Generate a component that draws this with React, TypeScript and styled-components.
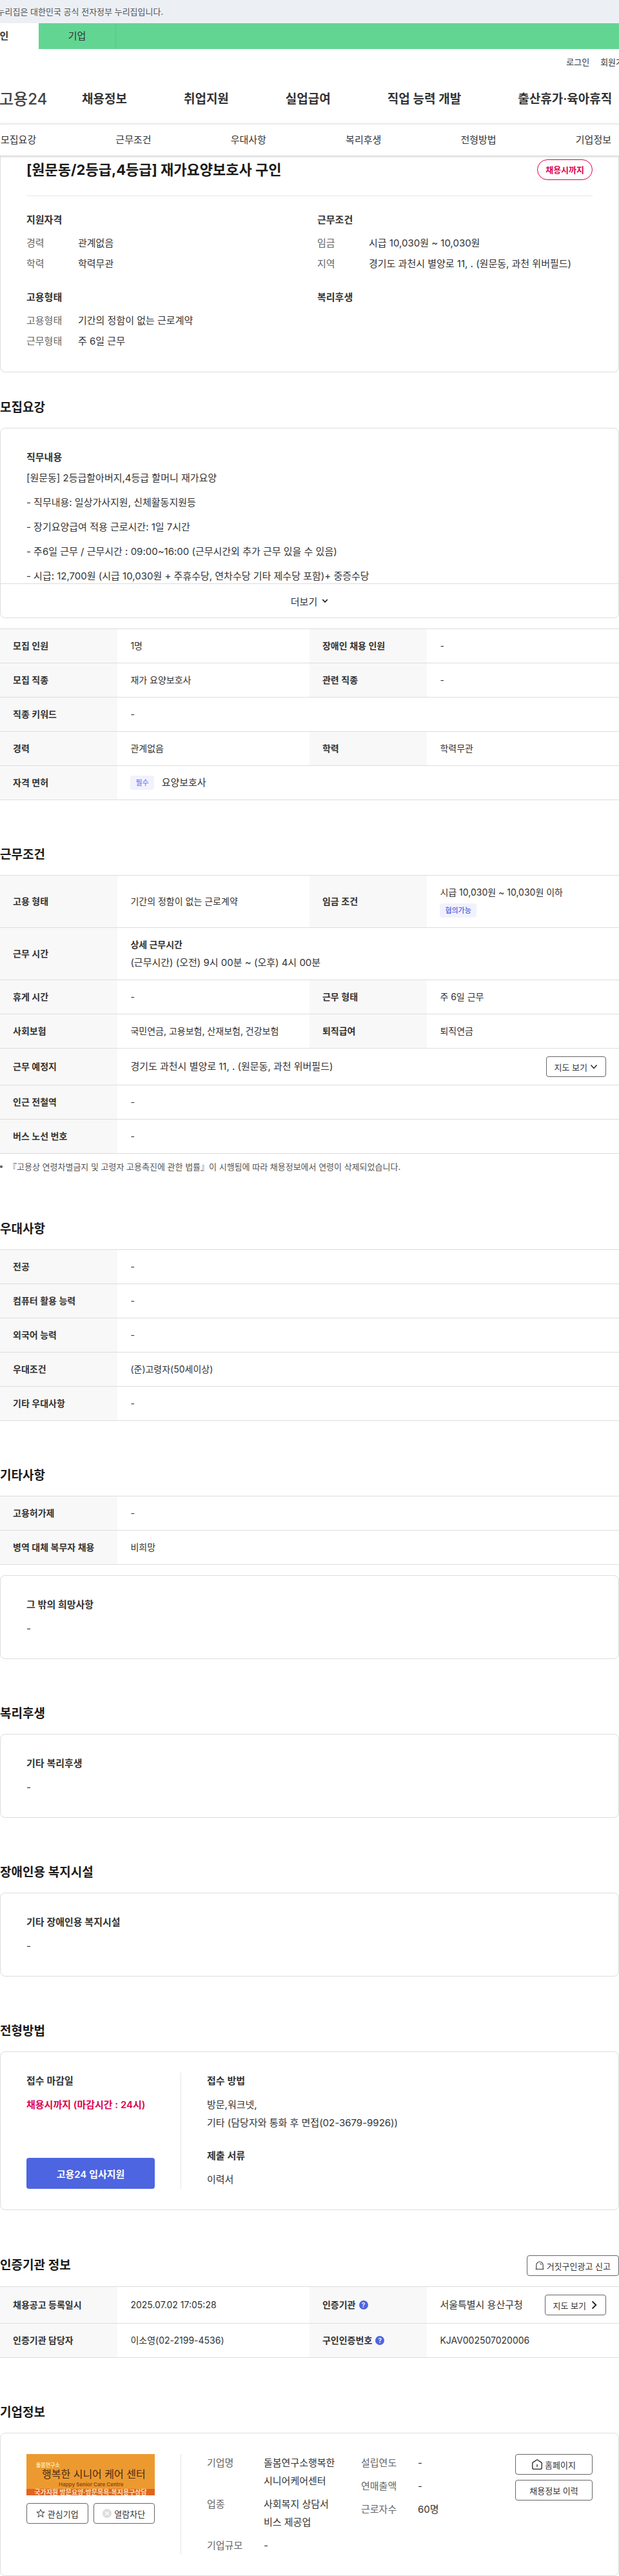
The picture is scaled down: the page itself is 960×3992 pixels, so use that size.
import React from "react";
import styled, { createGlobalStyle, css } from "styled-components";

const GlobalStyle = createGlobalStyle`
  *, *::before, *::after { box-sizing: border-box; }
  body {
    margin: 0;
    background: #fff;
    color: #333;
    font-family: Inter, "Noto Sans CJK KR", sans-serif;
    font-size: 15px;
    line-height: 24px;
    overflow-x: hidden;
  }
  h1, h2, h3, p, dl, dd, ul, figure { margin: 0; padding: 0; }
  a { color: inherit; text-decoration: none; }
  button { font-family: inherit; color: inherit; cursor: pointer; }
`;

/* ---------- header ---------- */

const Clip = styled.div`
  overflow: hidden;
`;

const OfficialBanner = styled(Clip)`
  height: 36px;
  background: #ecf0f5;
`;

const OfficialText = styled.p`
  margin-left: -20px;
  font-size: 13px;
  line-height: 36px;
  color: #555;
  white-space: nowrap;
`;

const MemberTabs = styled(Clip)`
  background: #62d593;
`;

const TabList = styled.nav`
  display: flex;
  margin-left: -60px;
`;

const MemberTab = styled.a<{ $active?: boolean }>`
  width: 120px;
  height: 40px;
  line-height: 40px;
  text-align: center;
  border-right: 1px solid #56c987;
  ${(p) =>
    p.$active &&
    css`
      background: #fff;
      border-right-color: #fff;
      font-weight: 600;
    `}
`;

const Utility = styled(Clip)`
  display: flex;
  justify-content: flex-end;
  height: 40px;
`;

const UtilityLinks = styled.div`
  display: flex;
  gap: 17px;
  margin-right: -19px;
  font-size: 13px;
  line-height: 40px;
  white-space: nowrap;
`;

const MainNav = styled.nav`
  display: flex;
  align-items: center;
  height: 76px;
  white-space: nowrap;
`;

const Logo = styled.a`
  width: 128px;
  margin-left: -1px;
  font-size: 24px;
  font-weight: 500;
  color: #444;
`;

const MainMenu = styled.div`
  display: flex;
  flex: 1;
  gap: 88px;
  font-size: 19px;
  font-weight: 600;
`;

const SectionNav = styled.nav`
  position: relative;
  z-index: 1;
  display: flex;
  justify-content: space-between;
  padding: 0 12px 0 1px;
  border-top: 1px solid #e6e6e6;
  background: #fff;
  box-shadow: 0 1px 4px rgba(0, 0, 0, 0.25);
  line-height: 48px;
`;

/* ---------- shared blocks ---------- */

const Section = styled.section<{ $tight?: boolean }>`
  margin-top: ${(p) => (p.$tight ? 40 : 70)}px;
`;

const SectionHead = styled.div`
  display: flex;
  align-items: center;
  justify-content: space-between;
  margin-bottom: 16px;
`;

const Heading = styled.h2`
  font-size: 19px;
  line-height: 30px;
  font-weight: 600;
  color: #1a1a1a;
`;

const Card = styled.div<{ $spaced?: boolean }>`
  padding: 32px 40px;
  border: 1px solid #ddd;
  border-radius: 8px;
  margin-top: ${(p) => (p.$spaced ? 16 : 0)}px;
`;

const SubTitle = styled.h3`
  font-size: 15px;
  line-height: 26px;
  font-weight: 600;
`;

const BodyText = styled.p`
  margin-top: 10px;
  line-height: 28px;
`;

const Deadline = styled(BodyText)`
  font-weight: 600;
  color: #de0050;
`;

const OutlineButton = styled.button<{ $wide?: boolean }>`
  display: inline-flex;
  align-items: center;
  justify-content: center;
  gap: 4px;
  height: 32px;
  padding: 0 12px;
  flex: ${(p) => (p.$wide ? "1 1 0" : "none")};
  border: 1px solid #666;
  border-radius: 4px;
  background: #fff;
  font-size: 13px;
  white-space: nowrap;
`;

const Tag = styled.span<{ $soft?: boolean }>`
  display: inline-block;
  height: 22px;
  padding: 0 8px;
  border-radius: 4px;
  background: #f2f2fe;
  color: ${(p) => (p.$soft ? "#6c83f0" : "#4d63e0")};
  font-size: 11px;
  line-height: 22px;
  font-weight: 500;
`;

/* ---------- summary card ---------- */

const Summary = styled(Card)`
  padding-top: 6px;
  padding-bottom: 35px;
  border-top: 0;
  border-radius: 0 0 8px 8px;
`;

const TitleRow = styled.div`
  display: flex;
  align-items: center;
  justify-content: space-between;
  padding-bottom: 24px;
  border-bottom: 1px solid #e6e6e6;
`;

const JobTitle = styled.h1`
  font-size: 22px;
  line-height: 32px;
  font-weight: 700;
  color: #1a1a1a;
`;

const DueBadge = styled.span`
  padding: 0 12px;
  border: 1px solid #de0050;
  border-radius: 16px;
  color: #de0050;
  font-size: 13px;
  line-height: 30px;
  font-weight: 600;
`;

const SummaryGrid = styled.div`
  display: grid;
  grid-template-columns: 1fr 1fr;
  gap: 28px 24px;
  margin-top: 25px;
`;

const SummaryTitle = styled(SubTitle)`
  margin-bottom: 12px;
  line-height: 24px;
`;

const SummaryList = styled.dl`
  display: grid;
  grid-template-columns: 80px 1fr;
  row-gap: 8px;
  dt { color: #666; }
`;

/* ---------- job description ---------- */

const DescriptionCard = styled(Card)`
  padding: 0;
`;

const DescriptionBody = styled.div`
  max-height: 240px;
  padding: 32px 40px 0;
  overflow: hidden;
`;

const DescriptionLine = styled.p`
  line-height: 38px;
`;

const MoreButton = styled.button`
  display: flex;
  align-items: center;
  justify-content: center;
  gap: 7px;
  width: 100%;
  height: 53px;
  border: 0;
  border-top: 1px solid #ddd;
  border-radius: 0 0 8px 8px;
  background: #fff;
  font-size: 15px;
`;

/* ---------- tables ---------- */

const Table = styled.table`
  width: 100%;
  table-layout: fixed;
  border-collapse: separate;
  border-spacing: 0;
  border-top: 1px solid #ddd;
  font-size: 14px;

  th, td {
    height: 53px;
    padding: 12px 20px;
    border-bottom: 1px solid #ddd;
    text-align: left;
    vertical-align: middle;
  }
  th {
    background: #f8f8f8;
    font-weight: 600;
  }
`;

const LabelCol = styled.col`
  width: 19%;
`;

const ValueCol = styled.col`
  width: 31%;
`;

const TableGap = styled.div`
  margin-top: 16px;
`;

const Split = styled.div`
  display: flex;
  align-items: center;
  justify-content: space-between;
  font-size: 15px;
`;

const Tagged = styled.div`
  display: flex;
  align-items: center;
  gap: 12px;
  font-size: 15px;
`;

const Stack = styled.div`
  display: grid;
  gap: 4px;
  padding: 2px 0;
`;

const TagLine = styled.div`
  display: flex;
  align-items: center;
  height: 24px;
`;

const Large = styled.span`
  font-size: 15px;
`;

const HelpLabel = styled.span`
  display: inline-flex;
  align-items: center;
  gap: 5px;
`;

const HelpButton = styled.button`
  width: 14px;
  height: 14px;
  padding: 0;
  border: 0;
  border-radius: 50%;
  background: #4d65e0;
  color: #fff;
  font-size: 10px;
  line-height: 14px;
  font-weight: 600;
`;

const Note = styled.p`
  display: flex;
  align-items: center;
  gap: 9px;
  margin-top: 8px;
  font-size: 13px;
  color: #555;
  &::before {
    content: "";
    width: 4px;
    height: 4px;
    border-radius: 50%;
    background: #555;
  }
`;

/* ---------- two part cards ---------- */

const PartedCard = styled(Card)`
  display: flex;
`;

const SidePart = styled.div`
  display: flex;
  flex-direction: column;
  flex: none;
  width: 240px;
  padding-right: 40px;
  border-right: 1px solid #e6e6e6;
`;

const MainPart = styled.div`
  flex: 1;
  display: flex;
  align-items: flex-start;
  padding-left: 40px;
`;

const ApplyButton = styled.button`
  height: 48px;
  margin-top: auto;
  border: 0;
  border-radius: 4px;
  background: #4d65e0;
  color: #fff;
  font-size: 15px;
  font-weight: 600;
`;

const MethodGroup = styled.div`
  & + & { margin-top: 24px; }
`;

const CompanyLogo = styled.figure`
  display: flex;
  flex-direction: column;
  height: 64px;
  background: #ec9a30;
  white-space: nowrap;
`;

const LogoTop = styled.span`
  padding: 12px 0 0 15px;
  color: #fbe9b0;
  font-size: 8px;
  line-height: 10px;
  font-weight: 700;
`;

const LogoName = styled.span`
  padding-left: 24px;
  color: #4b2a12;
  font-size: 16px;
  line-height: 19px;
`;

const LogoEnglish = styled.span`
  padding-left: 50px;
  color: #8a4a17;
  font-size: 8px;
  line-height: 13px;
  font-weight: 600;
`;

const LogoStrip = styled.span`
  background: #e0641f;
  color: #fbe3c4;
  font-size: 10px;
  line-height: 10px;
  font-weight: 600;
  text-align: center;
`;

const ButtonPair = styled.div`
  display: flex;
  gap: 8px;
  margin-top: 12px;
`;

const CompanyList = styled.dl`
  flex: 1;
  display: grid;
  grid-template-columns: 88px 1fr;
  row-gap: 8px;
  padding-right: 38px;
  line-height: 28px;
  dt { color: #666; }
`;

const ButtonColumn = styled.div`
  display: grid;
  flex: none;
  gap: 8px;
  width: 120px;
`;

/* ---------- icons ---------- */

const Chevron = ({ dir, size, weight }: { dir: "down" | "right"; size: number; weight: number }) => (
  <svg width={size} height={size} viewBox="0 0 10 10" fill="none" stroke="#222" strokeWidth={weight} aria-hidden="true">
    <path d={dir === "down" ? "M1.2 3 5 7l3.8-4" : "M4 1l4 4-4 4"} />
  </svg>
);

const StarIcon = () => (
  <svg width="14" height="14" viewBox="0 0 14 14" fill="none" stroke="#555" strokeWidth="1.1" strokeLinejoin="round" aria-hidden="true">
    <path d="M7 .9l1.7 4H13L9.6 7.700l1.300 4.900L7 9.800l-3.900 2.800 1.300-4.900L1 4.900h4.300z" />
  </svg>
);

const BlockIcon = () => (
  <svg width="14" height="14" viewBox="0 0 14 14" aria-hidden="true">
    <circle cx="7" cy="7" r="7" fill="#ddd" />
    <path d="M4.200 4.200l5.600 5.600M9.800 4.200L4.200 9.800" stroke="#fff" strokeWidth="1.400" />
  </svg>
);

const SirenIcon = () => (
  <svg width="14" height="14" viewBox="0 0 14 14" fill="none" stroke="#333" strokeWidth="1.100" aria-hidden="true">
    <path d="M1.800 12.500V6.200a5.200 5.200 0 0 1 10.400 0v6.300M.6 12.500h12.800M7.500 3.800a2.200 2.200 0 0 1 2 2" />
  </svg>
);

const HomeIcon = () => (
  <svg width="16" height="16" viewBox="0 0 16 16" fill="none" stroke="#222" strokeWidth="1.300" strokeLinejoin="round" aria-hidden="true">
    <path d="M.8 5.400 8 .8l7.200 4.600v8.200a1.800 1.800 0 0 1-1.800 1.800H2.600a1.800 1.800 0 0 1-1.800-1.800zM8 8v4" />
  </svg>
);

/* ---------- data ---------- */

const menu = ["채용정보", "취업지원", "실업급여", "직업 능력 개발", "출산휴가·육아휴직"];
const sections = ["모집요강", "근무조건", "우대사항", "복리후생", "전형방법", "기업정보"];

const summary: { title: string; rows: [string, string][] }[] = [
  { title: "지원자격", rows: [["경력", "관계없음"], ["학력", "학력무관"]] },
  { title: "근무조건", rows: [["임금", "시급 10,030원 ~ 10,030원"], ["지역", "경기도 과천시 별양로 11, . (원문동, 과천 위버필드)"]] },
  { title: "고용형태", rows: [["고용형태", "기간의 정함이 없는 근로계약"], ["근무형태", "주 6일 근무"]] },
  { title: "복리후생", rows: [] },
];

const duties = [
  "[원문동] 2등급할아버지,4등급 할머니 재가요양",
  "- 직무내용: 일상가사지원, 신체활동지원등",
  "- 장기요양급여 적용 근로시간: 1일 7시간",
  "- 주6일 근무 / 근무시간 : 09:00~16:00 (근무시간외 추가 근무 있을 수 있음)",
  "- 시급: 12,700원 (시급 10,030원 + 주휴수당, 연차수당 기타 제수당 포함)+ 중증수당",
];

type Cell = [React.ReactNode, React.ReactNode];

const InfoTable = ({ rows }: { rows: Cell[][] }) => {
  const wide = rows.some((r) => r.length > 1);
  return (
    <Table>
      <colgroup>
        <LabelCol />
        {wide && <ValueCol />}
        {wide && <LabelCol />}
        <col />
      </colgroup>
      <tbody>
        {rows.map((cells, i) => (
          <tr key={i}>
            {cells.map(([label, value], j) => (
              <React.Fragment key={j}>
                <th scope="row">{label}</th>
                <td colSpan={wide && cells.length === 1 ? 3 : 1}>{value}</td>
              </React.Fragment>
            ))}
          </tr>
        ))}
      </tbody>
    </Table>
  );
};

const Help = ({ label }: { label: string }) => (
  <HelpLabel>
    {label}
    <HelpButton type="button" aria-label={`${label} 도움말`}>?</HelpButton>
  </HelpLabel>
);

const recruitRows: Cell[][] = [
  [["모집 인원", "1명"], ["장애인 채용 인원", "-"]],
  [["모집 직종", "재가 요양보호사"], ["관련 직종", "-"]],
  [["직종 키워드", "-"]],
  [["경력", "관계없음"], ["학력", "학력무관"]],
  [["자격 면허", <Tagged><Tag $soft>필수</Tag>요양보호사</Tagged>]],
];

const workRows: Cell[][] = [
  [
    ["고용 형태", "기간의 정함이 없는 근로계약"],
    ["임금 조건", <Stack><span>시급 10,030원 ~ 10,030원 이하</span><TagLine><Tag>협의가능</Tag></TagLine></Stack>],
  ],
  [["근무 시간", <Stack><strong>상세 근무시간</strong><Large>(근무시간) (오전) 9시 00분 ~ (오후) 4시 00분</Large></Stack>]],
  [["휴게 시간", "-"], ["근무 형태", "주 6일 근무"]],
  [["사회보험", "국민연금, 고용보험, 산재보험, 건강보험"], ["퇴직급여", "퇴직연금"]],
  [["근무 예정지", (
    <Split>
      경기도 과천시 별양로 11, . (원문동, 과천 위버필드)
      <OutlineButton type="button">지도 보기 <Chevron dir="down" size={12} weight={1.2} /></OutlineButton>
    </Split>
  )]],
  [["인근 전철역", "-"]],
  [["버스 노선 번호", "-"]],
];

const preferRows: Cell[][] = [
  [["전공", "-"]],
  [["컴퓨터 활용 능력", "-"]],
  [["외국어 능력", "-"]],
  [["우대조건", "(준)고령자(50세이상)"]],
  [["기타 우대사항", "-"]],
];

const etcRows: Cell[][] = [
  [["고용허가제", "-"]],
  [["병역 대체 복무자 채용", "비희망"]],
];

const certRows: Cell[][] = [
  [
    ["채용공고 등록일시", "2025.07.02 17:05:28"],
    [<Help label="인증기관" />, (
      <Split>
        서울특별시 용산구청
        <OutlineButton type="button">지도 보기 <Chevron dir="right" size={14} weight={1.4} /></OutlineButton>
      </Split>
    )],
  ],
  [["인증기관 담당자", "이소영(02-2199-4536)"], [<Help label="구인인증번호" />, "KJAV002507020006"]],
];

export default function App() {
  return (
    <>
      <GlobalStyle />
      <header>
        <OfficialBanner>
          <OfficialText>이 누리집은 대한민국 공식 전자정부 누리집입니다.</OfficialText>
        </OfficialBanner>
        <MemberTabs>
          <TabList>
            <MemberTab href="#personal" $active>개인</MemberTab>
            <MemberTab href="#company">기업</MemberTab>
          </TabList>
        </MemberTabs>
        <Utility>
          <UtilityLinks>
            <a href="#login">로그인</a>
            <a href="#join">회원가입</a>
          </UtilityLinks>
        </Utility>
        <MainNav>
          <Logo href="#home">고용24</Logo>
          <MainMenu>
            {menu.map((m) => <a key={m} href="#menu">{m}</a>)}
          </MainMenu>
        </MainNav>
        <SectionNav>
          {sections.map((s) => <a key={s} href={`#${s}`}>{s}</a>)}
        </SectionNav>
      </header>

      <main>
        <Summary>
          <TitleRow>
            <JobTitle>[원문동/2등급,4등급] 재가요양보호사 구인</JobTitle>
            <DueBadge>채용시까지</DueBadge>
          </TitleRow>
          <SummaryGrid>
            {summary.map((g) => (
              <div key={g.title}>
                <SummaryTitle>{g.title}</SummaryTitle>
                <SummaryList>
                  {g.rows.map(([k, v]) => (
                    <React.Fragment key={k}>
                      <dt>{k}</dt>
                      <dd>{v}</dd>
                    </React.Fragment>
                  ))}
                </SummaryList>
              </div>
            ))}
          </SummaryGrid>
        </Summary>

        <Section id="모집요강" $tight>
          <SectionHead><Heading>모집요강</Heading></SectionHead>
          <DescriptionCard>
            <DescriptionBody>
              <SubTitle>직무내용</SubTitle>
              {duties.map((d) => <DescriptionLine key={d}>{d}</DescriptionLine>)}
            </DescriptionBody>
            <MoreButton type="button">더보기 <Chevron dir="down" size={10} weight={1.8} /></MoreButton>
          </DescriptionCard>
          <TableGap><InfoTable rows={recruitRows} /></TableGap>
        </Section>

        <Section id="근무조건">
          <SectionHead><Heading>근무조건</Heading></SectionHead>
          <InfoTable rows={workRows} />
          <Note>『고용상 연령차별금지 및 고령자 고용촉진에 관한 법률』이 시행됨에 따라 채용정보에서 연령이 삭제되었습니다.</Note>
        </Section>

        <Section id="우대사항">
          <SectionHead><Heading>우대사항</Heading></SectionHead>
          <InfoTable rows={preferRows} />
        </Section>

        <Section>
          <SectionHead><Heading>기타사항</Heading></SectionHead>
          <InfoTable rows={etcRows} />
          <Card $spaced>
            <SubTitle>그 밖의 희망사항</SubTitle>
            <BodyText>-</BodyText>
          </Card>
        </Section>

        <Section id="복리후생">
          <SectionHead><Heading>복리후생</Heading></SectionHead>
          <Card>
            <SubTitle>기타 복리후생</SubTitle>
            <BodyText>-</BodyText>
          </Card>
        </Section>

        <Section>
          <SectionHead><Heading>장애인용 복지시설</Heading></SectionHead>
          <Card>
            <SubTitle>기타 장애인용 복지시설</SubTitle>
            <BodyText>-</BodyText>
          </Card>
        </Section>

        <Section id="전형방법">
          <SectionHead><Heading>전형방법</Heading></SectionHead>
          <PartedCard>
            <SidePart>
              <SubTitle>접수 마감일</SubTitle>
              <Deadline>채용시까지 (마감시간 : 24시)</Deadline>
              <ApplyButton type="button">고용24 입사지원</ApplyButton>
            </SidePart>
            <MainPart>
              <div>
                <MethodGroup>
                  <SubTitle>접수 방법</SubTitle>
                  <BodyText>방문,워크넷,<br />기타 (담당자와 통화 후 면접(02-3679-9926))</BodyText>
                </MethodGroup>
                <MethodGroup>
                  <SubTitle>제출 서류</SubTitle>
                  <BodyText>이력서</BodyText>
                </MethodGroup>
              </div>
            </MainPart>
          </PartedCard>
        </Section>

        <Section>
          <SectionHead>
            <Heading>인증기관 정보</Heading>
            <OutlineButton type="button"><SirenIcon />거짓구인광고 신고</OutlineButton>
          </SectionHead>
          <InfoTable rows={certRows} />
        </Section>

        <Section id="기업정보">
          <SectionHead><Heading>기업정보</Heading></SectionHead>
          <PartedCard>
            <SidePart>
              <CompanyLogo>
                <LogoTop>돌봄연구소</LogoTop>
                <LogoName>행복한 시니어 케어 센터</LogoName>
                <LogoEnglish>Happy Senior Care Centre</LogoEnglish>
                <LogoStrip>국가지원 방문요양·방문목욕·복지용구상담</LogoStrip>
              </CompanyLogo>
              <ButtonPair>
                <OutlineButton type="button" $wide><StarIcon />관심기업</OutlineButton>
                <OutlineButton type="button" $wide><BlockIcon />열람차단</OutlineButton>
              </ButtonPair>
            </SidePart>
            <MainPart>
              <CompanyList>
                <dt>기업명</dt><dd>돌봄연구소행복한시니어케어센터</dd>
                <dt>업종</dt><dd>사회복지 상담서비스 제공업</dd>
                <dt>기업규모</dt><dd>-</dd>
              </CompanyList>
              <CompanyList>
                <dt>설립연도</dt><dd>-</dd>
                <dt>연매출액</dt><dd>-</dd>
                <dt>근로자수</dt><dd>60명</dd>
              </CompanyList>
              <ButtonColumn>
                <OutlineButton type="button"><HomeIcon />홈페이지</OutlineButton>
                <OutlineButton type="button">채용정보 이력</OutlineButton>
              </ButtonColumn>
            </MainPart>
          </PartedCard>
        </Section>
      </main>
    </>
  );
}
